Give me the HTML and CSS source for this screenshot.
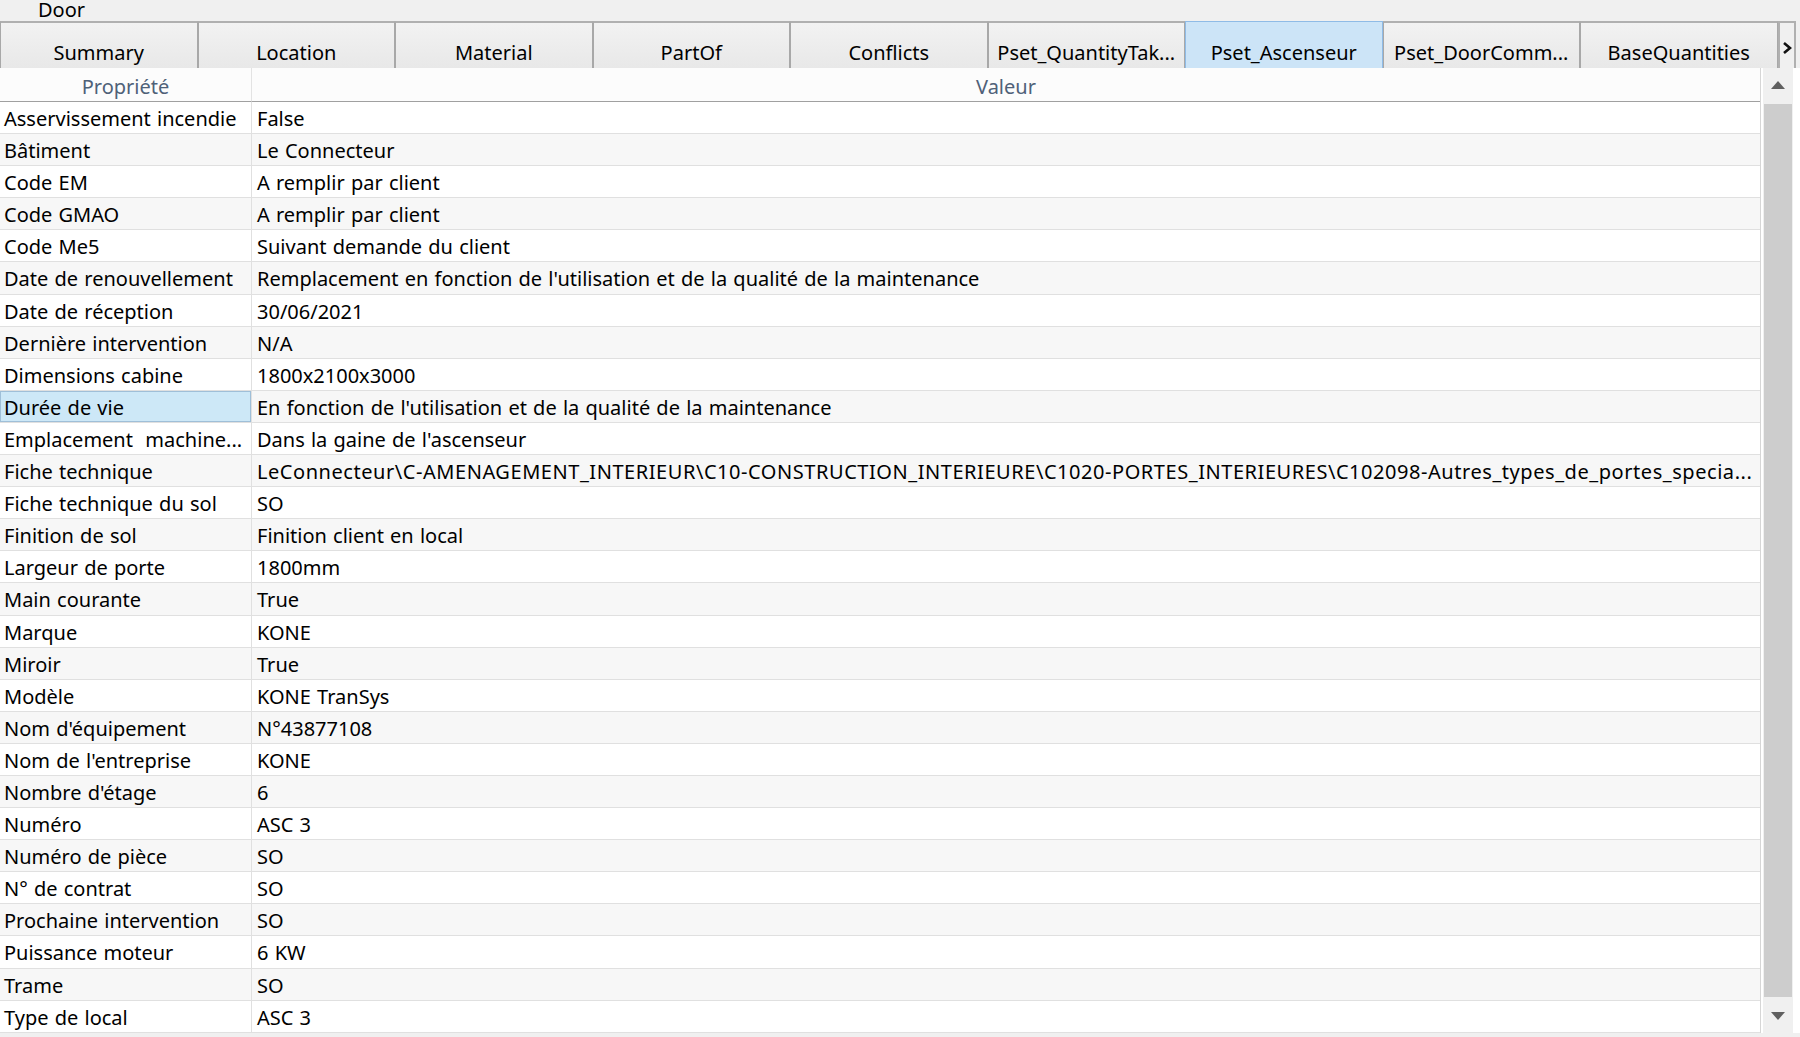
FILE: index.html
```html
<!DOCTYPE html>
<html lang="fr">
<head>
    <meta charset="UTF-8">
    <title>Door - Propriétés</title>
    <link rel="stylesheet" href="styles.css">
</head>
<body>
    <div class="title">Door</div>

    <div class="tabs">
        <div class="tab">Summary</div>
        <div class="tab">Location</div>
        <div class="tab">Material</div>
        <div class="tab">PartOf</div>
        <div class="tab">Conflicts</div>
        <div class="tab">Pset_QuantityTak...</div>
        <div class="tab active">Pset_Ascenseur</div>
        <div class="tab">Pset_DoorComm...</div>
        <div class="tab">BaseQuantities</div>
        <div class="tab-scroll">
            <svg width="10" height="12" viewBox="0 0 10 12"><path d="M2 1 L8 6 L2 11" fill="none" stroke="#111" stroke-width="2.6"/></svg>
        </div>
    </div>

    <div class="panel">
        <div class="grid">
            <div class="head">Propriété</div>
            <div class="head">Valeur</div>

            <div class="cell key">Asservissement incendie</div><div class="cell">False</div>
            <div class="cell key alt">Bâtiment</div><div class="cell alt">Le Connecteur</div>
            <div class="cell key">Code EM</div><div class="cell">A remplir par client</div>
            <div class="cell key alt">Code GMAO</div><div class="cell alt">A remplir par client</div>
            <div class="cell key">Code Me5</div><div class="cell">Suivant demande du client</div>
            <div class="cell key alt">Date de renouvellement</div><div class="cell alt">Remplacement en fonction de l'utilisation et de la qualité de la maintenance</div>
            <div class="cell key">Date de réception</div><div class="cell">30/06/2021</div>
            <div class="cell key alt">Dernière intervention</div><div class="cell alt">N/A</div>
            <div class="cell key">Dimensions cabine</div><div class="cell">1800x2100x3000</div>
            <div class="cell key selected">Durée de vie</div><div class="cell alt">En fonction de l'utilisation et de la qualité de la maintenance</div>
            <div class="cell key">Emplacement&nbsp; machine...</div><div class="cell">Dans la gaine de l'ascenseur</div>
            <div class="cell key alt">Fiche technique</div><div class="cell alt path">LeConnecteur\C-AMENAGEMENT_INTERIEUR\C10-CONSTRUCTION_INTERIEURE\C1020-PORTES_INTERIEURES\C102098-Autres_types_de_portes_specia...</div>
            <div class="cell key">Fiche technique du sol</div><div class="cell">SO</div>
            <div class="cell key alt">Finition de sol</div><div class="cell alt">Finition client en local</div>
            <div class="cell key">Largeur de porte</div><div class="cell">1800mm</div>
            <div class="cell key alt">Main courante</div><div class="cell alt">True</div>
            <div class="cell key">Marque</div><div class="cell">KONE</div>
            <div class="cell key alt">Miroir</div><div class="cell alt">True</div>
            <div class="cell key">Modèle</div><div class="cell">KONE TranSys</div>
            <div class="cell key alt">Nom d'équipement</div><div class="cell alt">N°43877108</div>
            <div class="cell key">Nom de l'entreprise</div><div class="cell">KONE</div>
            <div class="cell key alt">Nombre d'étage</div><div class="cell alt">6</div>
            <div class="cell key">Numéro</div><div class="cell">ASC 3</div>
            <div class="cell key alt">Numéro de pièce</div><div class="cell alt">SO</div>
            <div class="cell key">N° de contrat</div><div class="cell">SO</div>
            <div class="cell key alt">Prochaine intervention</div><div class="cell alt">SO</div>
            <div class="cell key">Puissance moteur</div><div class="cell">6 KW</div>
            <div class="cell key alt">Trame</div><div class="cell alt">SO</div>
            <div class="cell key">Type de local</div><div class="cell">ASC 3</div>
        </div>

        <div class="scrollbar">
            <div class="arrow">
                <svg width="14" height="8" viewBox="0 0 14 8"><path d="M0 8 L7 0 L14 8 Z" fill="#606060"/></svg>
            </div>
            <div class="thumb"></div>
            <div class="arrow">
                <svg width="14" height="8" viewBox="0 0 14 8"><path d="M0 0 L7 8 L14 0 Z" fill="#606060"/></svg>
            </div>
        </div>
    </div>
</body>
</html>
```

FILE: styles.css
```css
body {
    margin: 0;
    background: #f0f0f0;
    font-family: 'Noto Sans', 'Open Sans', sans-serif;
    font-size: 20px;
    word-spacing: 1px;
    color: #000;
    overflow: hidden;
}

.title {
    height: 21px;
    line-height: 20px;
    padding-left: 38px;
}

.tabs {
    display: flex;
    height: 47px;
}

.tab {
    width: 197.5px;
    flex: none;
    box-sizing: border-box;
    border-top: 2px solid #b0b0b0;
    border-left: 1px solid #a8a8a8;
    border-right: 1px solid #a8a8a8;
    background: linear-gradient(#f2f2f2, #e8e8e8);
    text-align: center;
    padding-top: 16px;
    white-space: nowrap;
    overflow: hidden;
}

.tab.active {
    background: #cce4f7;
    border-color: #8fbbe6;
    border-top-width: 1px;
    padding-top: 17px;
}

.tab-scroll {
    width: 18px;
    flex: none;
    box-sizing: border-box;
    border: 2px solid #b0b0b0;
    border-bottom: none;
    display: flex;
    align-items: center;
    justify-content: center;
    padding-top: 4px;
}

.panel {
    display: flex;
    background: #fff;
    height: 965px;
}

.grid {
    width: 1761px;
    flex: none;
    display: grid;
    grid-template-columns: 252px 1fr;
    grid-template-rows: 34px;
    grid-auto-rows: 32.1px;
    border-right: 1px solid #d6d6d6;
    border-bottom: 1px solid #d6d6d6;
    box-sizing: border-box;
    align-self: flex-start;
}

.head {
    background: #fcfcfc;
    border-bottom: 1px solid #a0a0a0;
    color: #4f6178;
    text-align: center;
    line-height: 32px;
    padding-top: 3px;
    box-sizing: border-box;
}

.head:first-child {
    border-right: 1px solid #e3e3e3;
}

.cell {
    border-bottom: 1px solid #e0e0e0;
    padding: 1px 5px 0;
    line-height: 31px;
    white-space: nowrap;
    overflow: hidden;
    text-overflow: ellipsis;
}

.cell.key {
    padding-left: 4px;
    border-right: 1px solid #e0e0e0;
}

.cell.alt {
    background: #f7f7f7;
}

.cell.path {
    letter-spacing: 0.55px;
}

.cell.selected {
    background: #cde8f7;
    box-shadow: inset 0 0 0 1px #9fbfd8;
}

.scrollbar {
    width: 30px;
    margin-left: 2px;
    background: #f0f0f0;
    display: flex;
    flex-direction: column;
}

.arrow {
    height: 34px;
    display: flex;
    align-items: center;
    justify-content: center;
}

.thumb {
    flex: 1;
    background: #cdcdcd;
    margin: 2px 1px;
}
```
